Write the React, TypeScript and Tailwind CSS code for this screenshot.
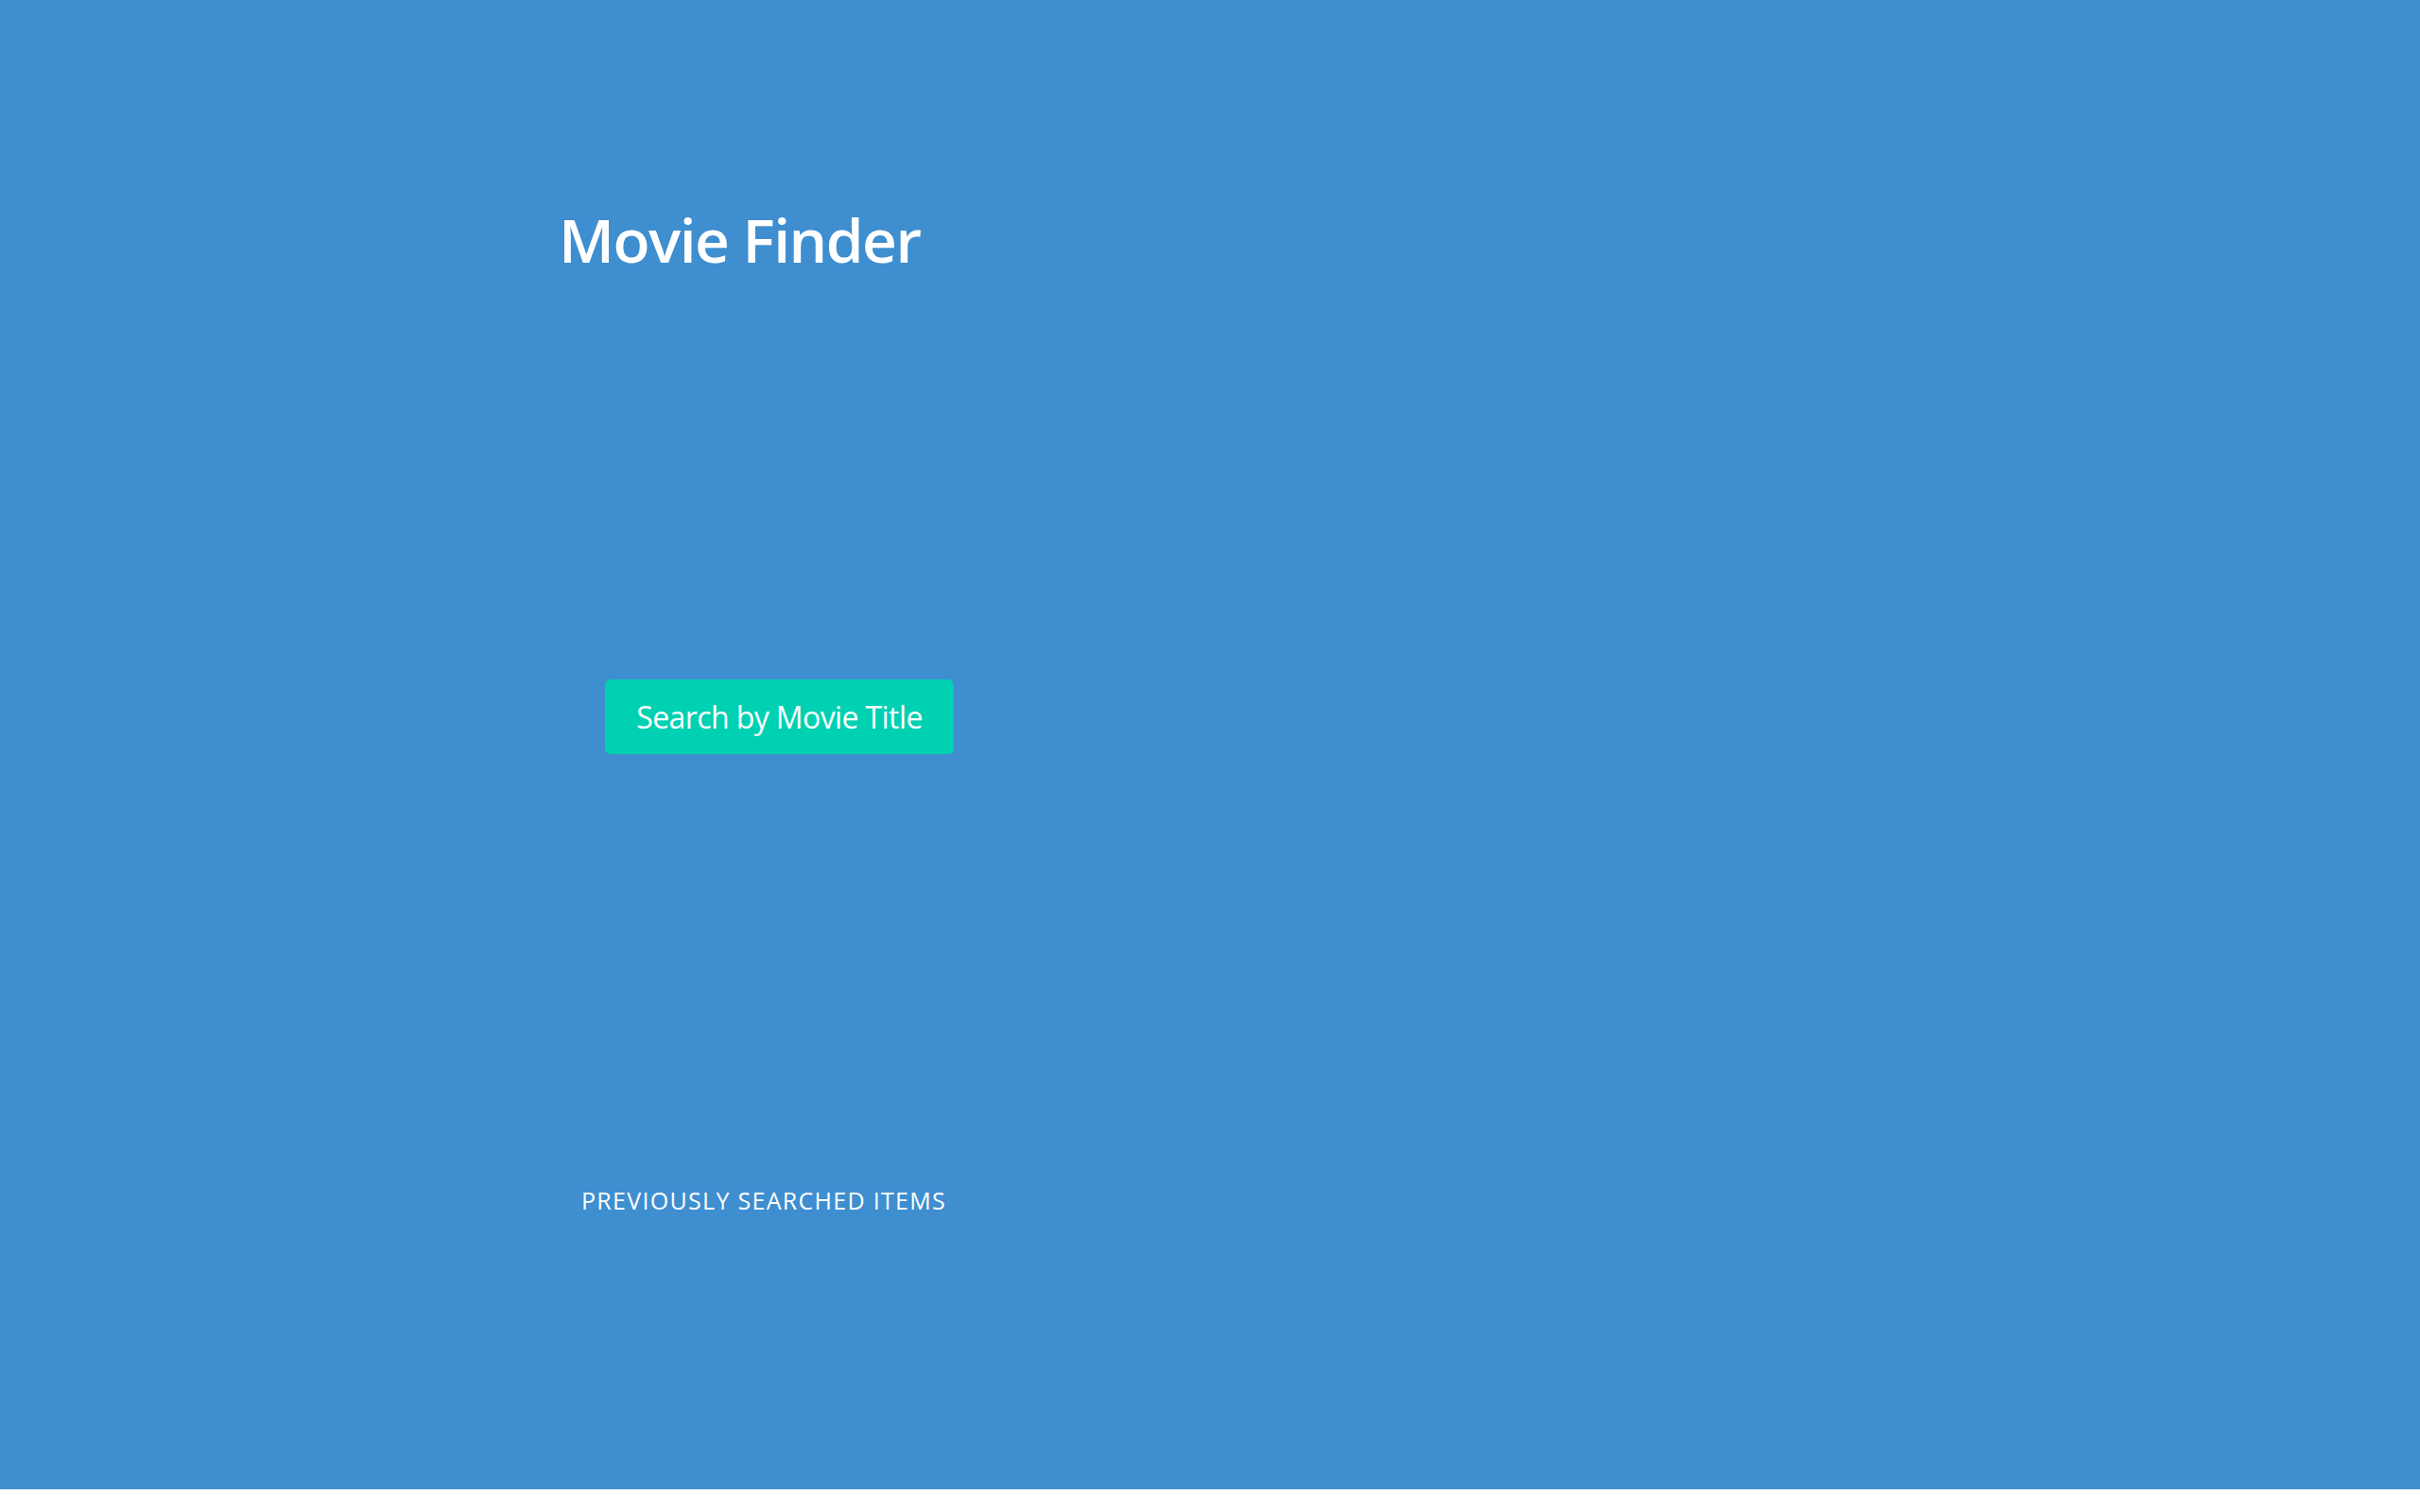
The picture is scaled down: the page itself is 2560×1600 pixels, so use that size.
export default function App() {
  return (
    <div className="bg-white min-h-[1600px] font-['Open_Sans','Noto_Sans',sans-serif]">
      <section className="h-[1576px] bg-[#3e8ed0] pl-[591px] text-white">
        <div className="flex w-[469px] flex-col items-start">
          <h1 className="mt-[222px] text-[64px] font-semibold leading-[64px] tracking-[-1.5px]">
            Movie Finder
          </h1>
          <button
            type="button"
            className="mt-[433px] ml-[49px] flex h-[79px] w-[369px] items-center justify-center rounded-[6px] bg-[#00d1b2] text-[32px] leading-[32px] tracking-[-0.6px] text-white"
          >
            Search by Movie Title
          </button>
          <p className="mt-[460px] ml-[24px] text-[25px] uppercase leading-[25px] tracking-[1.3px]">
            Previously searched items
          </p>
        </div>
      </section>
    </div>
  );
}
